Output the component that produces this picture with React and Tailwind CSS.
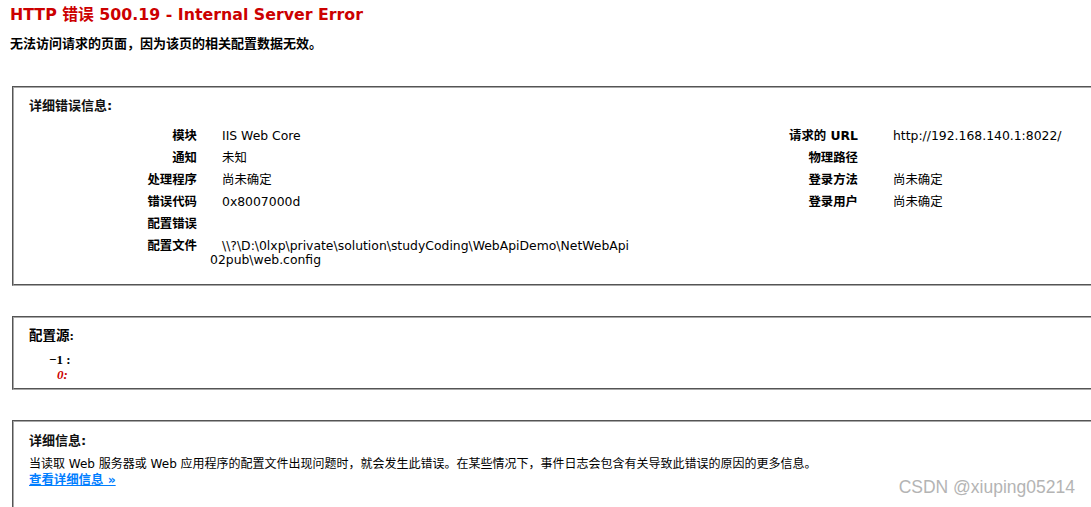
export default function App() {
  const leftRows = [
    ["模块", "IIS Web Core"],
    ["通知", "未知"],
    ["处理程序", "尚未确定"],
    ["错误代码", "0x8007000d"],
    ["配置错误", ""],
  ];
  const rightRows = [
    ["请求的 URL", "http://192.168.140.1:8022/"],
    ["物理路径", ""],
    ["登录方法", "尚未确定"],
    ["登录用户", "尚未确定"],
  ];

  const box =
    "ml-[12px] w-[1100px] border-2 [border-style:groove] border-[#a8a8a8] pl-[15px]";

  return (
    <div className="relative w-[1091px] h-[507px] overflow-hidden bg-white text-black font-['DejaVu_Sans','Noto_Sans_CJK_SC',sans-serif] text-[12.4px]">
      {/* heading */}
      <div className="pl-[10px] pt-[5px]">
        <h2 className="text-[15.8px] leading-[20px] font-bold text-[#cc0000]">
          HTTP 错误 500.19 - Internal Server Error
        </h2>
        <h3 className="mt-[11px] text-[13px] leading-[16px] font-bold">
          无法访问请求的页面，因为该页的相关配置数据无效。
        </h3>
      </div>

      {/* detailed error information */}
      <div className={`${box} mt-[34px] pt-[10px] pb-[13px]`}>
        <div className="text-[13px] font-bold leading-[16px] text-[#111]">详细错误信息:</div>
        <div className="mt-[11px] flex">
          <div className="w-[611px] grid grid-cols-[168px_1fr] gap-x-[13px] leading-[14px]">
            {leftRows.map(([k, v]) => (
              <div key={k} className="contents">
                <div className="py-[4px] text-right font-bold">{k}</div>
                <div className="py-[4px] pl-[12px] whitespace-nowrap">{v}</div>
              </div>
            ))}
            <div className="py-[4px] text-right font-bold">配置文件</div>
            <div className="py-[4px] whitespace-nowrap">
              <span className="pl-[12px]">
                \\?\D:\0lxp\private\solution\studyCoding\WebApiDemo\NetWebApi
              </span>
              <br />
              02pub\web.config
            </div>
          </div>
          <div className="w-[218px] grid grid-cols-[218px_auto] gap-x-[35px] content-start leading-[14px]">
            {rightRows.map(([k, v]) => (
              <div key={k} className="contents">
                <div className="py-[4px] text-right font-bold whitespace-nowrap">{k}</div>
                <div className="py-[4px] whitespace-nowrap">{v}</div>
              </div>
            ))}
          </div>
        </div>
      </div>

      {/* configuration source */}
      <div className={`${box} mt-[30px] pt-[10px] pb-[6px]`}>
        <div className="font-['Liberation_Serif','Noto_Sans_CJK_SC',serif] text-[13.5px] font-bold leading-[16px]">
          配置源:
        </div>
        <div className="mt-[8px] font-['Liberation_Serif',serif] text-[13px] font-bold leading-[15px]">
          <div className="pl-[20px]">−1 :</div>
          <div className="pl-[28px] italic text-[#cc0000]">0:</div>
        </div>
      </div>

      {/* more information */}
      <div className={`${box} mt-[30px] pt-[11px] h-[120px]`}>
        <div className="text-[13px] font-bold leading-[16px] text-[#111]">详细信息:</div>
        <p className="mt-[7px] text-[12px] leading-[16px] whitespace-nowrap">
          当读取 Web 服务器或 Web 应用程序的配置文件出现问题时，就会发生此错误。在某些情况下，事件日志会包含有关导致此错误的原因的更多信息。
        </p>
        <a href="#" className="block w-fit leading-[16px] font-bold text-[#007eff] underline">
          查看详细信息 »
        </a>
      </div>

      <div className="absolute right-[16px] bottom-[7px] font-['Liberation_Sans',sans-serif] text-[17.5px] text-[#b4b4b4]">
        CSDN @xiuping05214
      </div>
    </div>
  );
}
